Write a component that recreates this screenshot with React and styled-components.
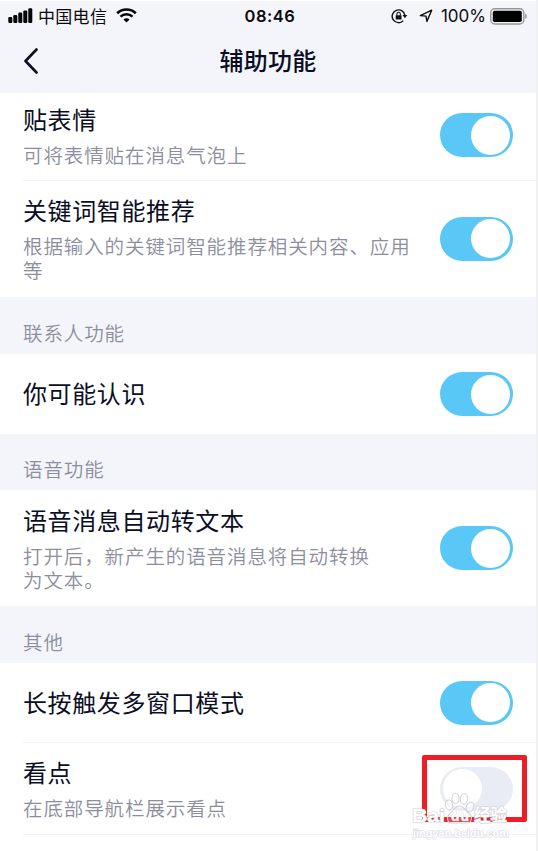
import React, { useState } from "react";
import styled, { createGlobalStyle } from "styled-components";

const GlobalStyle = createGlobalStyle`
  * {
    box-sizing: border-box;
  }
  body {
    margin: 0;
    background: #fff;
    font-family: "Noto Sans CJK SC", sans-serif;
    overflow: hidden;
  }
`;

const Page = styled.div`
  width: 538px;
  height: 851px;
  padding-top: 1px;
  border-right: 2px solid #f1f1f2;
  background: #fff;
  overflow: hidden;
`;

const Header = styled.header`
  height: 92px;
  background: #f4f5fa;
`;

const StatusBar = styled.div`
  display: grid;
  grid-template-columns: 1fr auto 1fr;
  align-items: center;
  height: 30px;
  padding: 0 8px;
  color: #0b0b0d;
`;

const StatusGroup = styled.div`
  display: flex;
  align-items: center;
  justify-content: ${(props) => (props.$end ? "flex-end" : "flex-start")};
`;

const Carrier = styled.span`
  margin: 0 9px 0 5px;
  font-size: 17px;
  letter-spacing: 0.3px;
  line-height: 22px;
  padding-bottom: 1px;
`;

const Clock = styled.span`
  padding-left: 4px;
  font-family: Inter, sans-serif;
  font-size: 16.5px;
  font-weight: 600;
  letter-spacing: 0.5px;
  line-height: 24px;
`;

const Percent = styled.span`
  margin: 0 4px 0 8px;
  font-family: Inter, sans-serif;
  font-size: 17px;
  line-height: 24px;
`;

const NavBar = styled.nav`
  display: grid;
  grid-template-columns: 1fr auto 1fr;
  align-items: center;
  height: 60px;
  padding: 0 23px;
`;

const BackButton = styled.button`
  display: flex;
  width: 16px;
  padding: 0;
  border: 0;
  background: none;
`;

const NavTitle = styled.h1`
  margin: 0;
  padding-bottom: 2px;
  color: #0a0e25;
  font-size: 24px;
  font-weight: 500;
  letter-spacing: 0.2px;
  line-height: 30px;
`;

const SectionLabel = styled.h2`
  display: flex;
  align-items: flex-end;
  height: ${(props) => props.$height}px;
  margin: 0;
  padding: 0 23px 9px;
  background: #f4f5fa;
  color: #8c8e9e;
  font-size: 19.5px;
  font-weight: 350;
  letter-spacing: 0.9px;
  line-height: 24px;
`;

const Row = styled.div`
  display: flex;
  align-items: center;
  justify-content: space-between;
  height: ${(props) => props.$height}px;
  margin-left: 23px;
  padding-right: 23px;
  padding-bottom: ${(props) => props.$lift || 0}px;
  border-bottom: ${(props) => (props.$divided ? "1px solid #f2f3f8" : "0")};
`;

const RowText = styled.div`
  padding-bottom: ${(props) => (props.$single ? 2 : 0)}px;
`;

const RowTitle = styled.div`
  color: #0a0e25;
  font-size: 24px;
  font-weight: 400;
  letter-spacing: 0.62px;
  line-height: 30px;
`;

const RowNote = styled.div`
  margin-top: 9px;
  color: #8c8e9e;
  font-size: 19.5px;
  font-weight: 350;
  letter-spacing: 0.9px;
  line-height: 24px;
  white-space: pre;
`;

const Switch = styled.button`
  display: flex;
  flex: none;
  align-items: center;
  justify-content: ${(props) => (props.$on ? "flex-end" : "flex-start")};
  width: 73px;
  height: 44px;
  padding: 0 3px;
  border: 0;
  border-radius: 22px;
  background: ${(props) => (props.$on ? "#5ac8f7" : "#e9ebf5")};
`;

const Knob = styled.span`
  width: 39px;
  height: 39px;
  border-radius: 50%;
  background: #fff;
`;

const Highlight = styled.div`
  position: absolute;
  left: 422px;
  top: 755px;
  width: 105px;
  height: 67px;
  border: 5px solid #ee1c25;
  border-radius: 2px;
  pointer-events: none;
`;

const Watermark = styled.svg`
  position: absolute;
  left: 408px;
  top: 786px;
  pointer-events: none;
`;

const SignalIcon = () => (
  <svg width="25" height="16" viewBox="0 0 25 16" fill="#050505">
    <rect x="0.3" y="9" width="4" height="6" rx="1.2" />
    <rect x="5.3" y="7" width="4" height="8" rx="1.2" />
    <rect x="10.3" y="4.6" width="4" height="10.4" rx="1.2" />
    <rect x="15.3" y="2.4" width="4" height="12.6" rx="1.2" />
    <rect x="20.3" y="0.3" width="4" height="14.7" rx="1.2" />
  </svg>
);

const WifiIcon = () => (
  <svg width="21" height="16" viewBox="0 0 21 16" fill="none">
    <path d="M1.2 5.2C6.3.2 14.7.2 19.8 5.2" stroke="#050505" strokeWidth="2.6" />
    <path d="M4.5 8.6c3.3-3.1 8.7-3.1 12 0" stroke="#050505" strokeWidth="2.5" />
    <path d="M7.4 11.4c1.7-1.7 4.5-1.7 6.2 0l-3.1 3.1z" fill="#050505" />
  </svg>
);

const LockIcon = styled(({ className }) => (
  <svg className={className} width="17" height="16" viewBox="0 0 17 16" fill="none">
    <path d="M12.3 12.6A6.4 6.4 0 1 1 13.9 7.3" stroke="#111" strokeWidth="1.4" />
    <path d="M11.5 7h4.8l-2.4 3.3z" fill="#111" />
    <rect x="4.7" y="7.2" width="5.8" height="4.3" rx="0.6" fill="#111" />
    <path d="M5.9 7.4V5.9a1.7 1.7 0 0 1 3.4 0v1.5" stroke="#111" strokeWidth="1.1" />
  </svg>
))`
  margin-right: 11px;
`;

const LocationIcon = () => (
  <svg width="14" height="14" viewBox="0 0 14 14" fill="none">
    <path
      d="M1.3 6.6 12.7 1.2 7.9 12.4 7 7.1z"
      stroke="#111"
      strokeWidth="1.4"
      strokeLinejoin="round"
    />
  </svg>
);

const BatteryIcon = () => (
  <svg width="38" height="17" viewBox="0 0 38 17" fill="none">
    <rect x="0.8" y="0.8" width="33" height="15.2" rx="4" stroke="#96979b" strokeWidth="1.4" />
    <rect x="2.8" y="2.8" width="29" height="11.2" rx="1.8" fill="#000" />
    <path d="M35.2 5.8c2.2.6 2.2 4.6 0 5.2z" fill="#96979b" />
  </svg>
);

const PawMark = () => (
  <Watermark width="116" height="56" viewBox="0 0 116 56">
    <g fill="#fff" fillOpacity="0.5" stroke="#d3d3db" strokeWidth="1.1">
      <ellipse cx="41" cy="19" rx="3.6" ry="5" transform="rotate(-12 41 19)" />
      <ellipse cx="47.5" cy="12.5" rx="3.5" ry="5.3" />
      <ellipse cx="56" cy="13" rx="3.5" ry="5.3" transform="rotate(8 56 13)" />
      <ellipse cx="62" cy="21" rx="3.6" ry="5" transform="rotate(22 62 21)" />
      <path
        d="M51.5 20c4.5 0 5.5 4.5 9.5 7.5s3 9.5-2 9.5h-15c-5 0-6-6-2-9.5s5-7.5 9.5-7.5z"
        fillOpacity="0.15"
      />
    </g>
    <g
      fill="#fff"
      stroke="#cfcfd7"
      strokeWidth="1.2"
      paintOrder="stroke"
      fontFamily="Liberation Sans, Noto Sans CJK SC, sans-serif"
      fontWeight="700"
    >
      <text x="4" y="35.5" fontSize="19" textLength="33" lengthAdjust="spacingAndGlyphs">
        Bai
      </text>
      <text x="43" y="35" fontSize="14" textLength="18" strokeWidth="0.6">
        du
      </text>
      <text x="66" y="34.5" fontSize="16.5" textLength="33">
        经验
      </text>
      <text
        x="5"
        y="50.5"
        fontSize="11"
        textLength="96"
        lengthAdjust="spacingAndGlyphs"
        stroke="#d9d9e0"
      >
        jingyan.baidu.com
      </text>
    </g>
  </Watermark>
);

const sections = [
  {
    rows: [
      {
        title: "贴表情",
        note: "可将表情贴在消息气泡上",
        height: 88,
        lift: 3,
        on: true,
        divided: true,
      },
      {
        title: "关键词智能推荐",
        note: "根据输入的关键词智能推荐相关内容、应用\n等",
        height: 116,
        lift: 1,
        on: true,
      },
    ],
  },
  {
    label: "联系人功能",
    labelHeight: 57,
    rows: [{ title: "你可能认识", height: 80, on: true }],
  },
  {
    label: "语音功能",
    labelHeight: 56,
    rows: [
      {
        title: "语音消息自动转文本",
        note: "打开后，新产生的语音消息将自动转换\n为文本。",
        height: 116,
        on: true,
      },
    ],
  },
  {
    label: "其他",
    labelHeight: 57,
    rows: [
      { title: "长按触发多窗口模式", height: 80, on: true, divided: true },
      { title: "看点", note: "在底部导航栏展示看点", height: 92, on: false, divided: true },
    ],
  },
];

const SettingRow = ({ title, note, height, lift, on, divided }) => {
  const [checked, setChecked] = useState(on);

  return (
    <Row $height={height} $lift={lift} $divided={divided}>
      <RowText $single={!note}>
        <RowTitle>{title}</RowTitle>
        {note && <RowNote>{note}</RowNote>}
      </RowText>
      <Switch
        role="switch"
        aria-checked={checked}
        aria-label={title}
        $on={checked}
        onClick={() => setChecked(!checked)}
      >
        <Knob />
      </Switch>
    </Row>
  );
};

export default () => {
  return (
    <Page>
      <GlobalStyle />
      <Header>
        <StatusBar>
          <StatusGroup>
            <SignalIcon />
            <Carrier>中国电信</Carrier>
            <WifiIcon />
          </StatusGroup>
          <Clock>08:46</Clock>
          <StatusGroup $end>
            <LockIcon />
            <LocationIcon />
            <Percent>100%</Percent>
            <BatteryIcon />
          </StatusGroup>
        </StatusBar>
        <NavBar>
          <BackButton aria-label="返回">
            <svg width="16" height="26" viewBox="0 0 16 26" fill="none">
              <path
                d="M13.5 1.5 2.5 13l11 11.5"
                stroke="#0a0e25"
                strokeWidth="2.6"
                strokeLinecap="round"
                strokeLinejoin="round"
              />
            </svg>
          </BackButton>
          <NavTitle>辅助功能</NavTitle>
        </NavBar>
      </Header>

      {sections.map((section, i) => (
        <section key={i}>
          {section.label && (
            <SectionLabel $height={section.labelHeight}>{section.label}</SectionLabel>
          )}
          {section.rows.map((row) => (
            <SettingRow key={row.title} {...row} />
          ))}
        </section>
      ))}

      <Highlight />
      <PawMark />
    </Page>
  );
};
